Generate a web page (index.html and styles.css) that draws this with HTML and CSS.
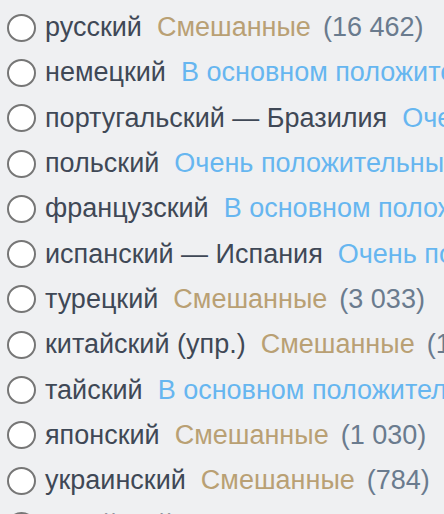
FILE: index.html
```html
<!DOCTYPE html>
<html lang="ru">
<head>
<meta charset="utf-8">
<link rel="stylesheet" href="styles.css">
</head>
<body>
<ul class="langs">
  <li class="row"><span class="radio"></span><span class="name">русский</span><span class="mixed">Смешанные</span><span class="count">(16 462)</span></li>
  <li class="row"><span class="radio"></span><span class="name">немецкий</span><span class="positive">В основном положительные</span><span class="count">(5 210)</span></li>
  <li class="row"><span class="radio"></span><span class="name">португальский — Бразилия</span><span class="positive">Очень положительные</span><span class="count">(4 120)</span></li>
  <li class="row"><span class="radio"></span><span class="name">польский</span><span class="positive">Очень положительные</span><span class="count">(3 905)</span></li>
  <li class="row"><span class="radio"></span><span class="name">французский</span><span class="positive">В основном положительные</span><span class="count">(3 541)</span></li>
  <li class="row"><span class="radio"></span><span class="name">испанский — Испания</span><span class="positive">Очень положительные</span><span class="count">(3 102)</span></li>
  <li class="row"><span class="radio"></span><span class="name">турецкий</span><span class="mixed">Смешанные</span><span class="count">(3 033)</span></li>
  <li class="row"><span class="radio"></span><span class="name">китайский (упр.)</span><span class="mixed">Смешанные</span><span class="count">(1 870)</span></li>
  <li class="row"><span class="radio"></span><span class="name">тайский</span><span class="positive">В основном положительные</span><span class="count">(1 204)</span></li>
  <li class="row"><span class="radio"></span><span class="name">японский</span><span class="mixed">Смешанные</span><span class="count">(1 030)</span></li>
  <li class="row"><span class="radio"></span><span class="name">украинский</span><span class="mixed">Смешанные</span><span class="count">(784)</span></li>
  <li class="row"><span class="radio"></span><span class="name">корейский</span><span class="mixed">Смешанные</span><span class="count">(702)</span></li>
</ul>
</body>
</html>
```
FILE: styles.css
```css
html, body {
  margin: 0;
  padding: 0;
  background: #eff0f2;
  overflow: hidden;
}
body {
  width: 444px;
  height: 514px;
  font-family: "Liberation Sans", Arial, sans-serif;
  font-size: 27px;
}
.langs {
  list-style: none;
  margin: 0;
  padding: 5px 0 0 7px;
}
.row {
  display: flex;
  align-items: center;
  height: 45.3px;
  white-space: nowrap;
}
.radio {
  flex: none;
  width: 25px;
  height: 24px;
  border: 2px solid #767676;
  border-radius: 50%;
  background: #fff;
  margin-right: 9px;
}
.name {
  color: #3f4856;
  margin-right: 15px;
}
.mixed {
  color: #b9a074;
  margin-right: 12px;
}
.positive {
  color: #66b6f0;
  margin-right: 12px;
}
.count {
  color: #6a7b8e;
}
```
